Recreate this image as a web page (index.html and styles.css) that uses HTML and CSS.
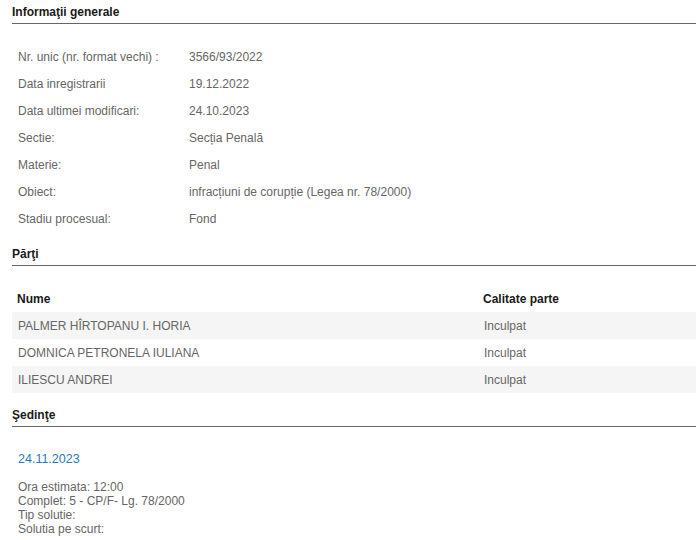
FILE: index.html
```html
<!DOCTYPE html>
<html lang="ro">
<head>
<meta charset="utf-8">
<title>Dosar</title>
<link rel="stylesheet" href="styles.css">
</head>
<body>
<div class="page">
  <h2 class="section-title first">Informaţii generale</h2>
  <table class="info">
    <tr><td class="label">Nr. unic (nr. format vechi) :</td><td>3566/93/2022</td></tr>
    <tr><td class="label">Data inregistrarii</td><td>19.12.2022</td></tr>
    <tr><td class="label">Data ultimei modificari:</td><td>24.10.2023</td></tr>
    <tr><td class="label">Sectie:</td><td>Secția Penală</td></tr>
    <tr><td class="label">Materie:</td><td>Penal</td></tr>
    <tr><td class="label">Obiect:</td><td>infracțiuni de corupție (Legea nr. 78/2000)</td></tr>
    <tr><td class="label">Stadiu procesual:</td><td>Fond</td></tr>
  </table>

  <h2 class="section-title">Părţi</h2>
  <table class="parti">
    <thead>
      <tr><th class="col-name">Nume</th><th>Calitate parte</th></tr>
    </thead>
    <tbody>
      <tr class="odd"><td class="col-name">PALMER HÎRTOPANU I. HORIA</td><td>Inculpat</td></tr>
      <tr><td class="col-name">DOMNICA PETRONELA IULIANA</td><td>Inculpat</td></tr>
      <tr class="odd"><td class="col-name">ILIESCU ANDREI</td><td>Inculpat</td></tr>
    </tbody>
  </table>

  <h2 class="section-title">Şedinţe</h2>
  <div class="sedinta">
    <div class="sedinta-date">24.11.2023</div>
    <div class="sedinta-details">
      Ora estimata: 12:00<br>
      Complet: 5 - CP/F- Lg. 78/2000<br>
      Tip solutie:<br>
      Solutia pe scurt:
    </div>
  </div>
</div>
</body>
</html>
```

FILE: styles.css
```css
html, body {
  margin: 0;
  padding: 0;
  background: #fff;
}
body {
  font-family: "Liberation Sans", Arial, sans-serif;
  font-size: 12px;
  color: #666;
}
.page {
  padding: 0 4px 0 12px;
}
.section-title {
  margin: 0;
  font-family: "Liberation Sans", Arial, sans-serif;
  font-size: 12px;
  font-weight: bold;
  color: #1a1a1a;
  line-height: 16px;
  padding: 14px 0 3px 0;
  border-bottom: 1px solid #666;
}
.section-title.first {
  padding-top: 4px;
}
table {
  border-collapse: collapse;
  width: 100%;
}
.info {
  margin-top: 19px;
}
.info td {
  height: 27px;
  padding: 0 0 0 6px;
  vertical-align: middle;
  line-height: 14px;
}
.info td.label {
  width: 165px;
}
.parti {
  margin-top: 19px;
}
.parti th,
.parti td {
  height: 27px;
  padding: 0 0 0 6px;
  text-align: left;
  vertical-align: middle;
  line-height: 14px;
}
.parti th {
  font-weight: bold;
  color: #1a1a1a;
  padding-left: 5px;
}
.parti .col-name {
  width: 460px;
}
.parti tr.odd td {
  background: #f5f5f5;
}
.sedinta {
  padding: 25px 0 0 6px;
}
.sedinta-date {
  color: #2a7bbf;
  line-height: 14px;
  font-size: 12.5px;
}
.sedinta-details {
  margin-top: 14px;
  line-height: 14px;
}
```
